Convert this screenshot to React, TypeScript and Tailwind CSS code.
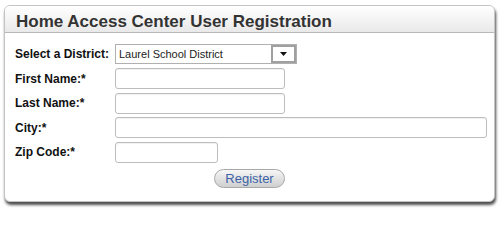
const fields = [
  { label: "First Name:*", width: "w-[170px]" },
  { label: "Last Name:*", width: "w-[170px]" },
  { label: "City:*", width: "w-[372px]" },
  { label: "Zip Code:*", width: "w-[103px]" },
];

export default function App() {
  return (
    <div className="h-[208px] w-[500px] bg-white pl-[4px] pt-[5px] font-['Liberation_Sans',Arial,sans-serif]">
      <div className="h-[197px] w-[491px] overflow-hidden rounded-[6px] border border-[#c4c4c4] bg-white shadow-[1px_3px_3px_rgba(0,0,0,0.7)]">
        <div className="h-[27px] border-b border-[#b8b8b8] bg-gradient-to-b from-white to-[#e9e9e9] pl-[11px] pt-[6px] text-[17px] font-bold leading-[20px] text-[#333]">
          Home Access Center User Registration
        </div>

        <div className="flex flex-col pl-[10px] pt-[9px]">
          <div className="flex h-[24.5px] items-center">
            <label className="w-[100px] text-[12px] font-bold leading-[14px] text-[#111]">
              Select a District:
            </label>
            <div className="flex h-[20px] w-[182px] border border-[#b0b0b0]">
              <div className="flex flex-1 items-center pl-[3px] text-[11px] text-[#222]">
                Laurel School District
              </div>
              <div className="flex w-[25px] items-center justify-center border-2 border-[#a0a0a0] bg-white">
                <svg width="7" height="4" viewBox="0 0 7 4">
                  <path d="M0 0 H7 L3.5 4 Z" fill="#111" />
                </svg>
              </div>
            </div>
          </div>

          {fields.map((field) => (
            <div key={field.label} className="flex h-[24.5px] items-center">
              <label className="w-[100px] text-[12px] font-bold leading-[14px] text-[#111]">
                {field.label}
              </label>
              <input
                type="text"
                className={`h-[21px] ${field.width} rounded-[3px] border border-[#bdbdbd] bg-white shadow-[inset_0_1px_1px_rgba(0,0,0,0.06)] outline-none`}
              />
            </div>
          ))}
        </div>

        <div className="mt-[4px] flex justify-center">
          <button className="h-[19px] w-[71px] rounded-full border border-[#a9a9a9] bg-gradient-to-b from-[#f6f6f6] to-[#cfcfcf] text-[13px] leading-[17px] text-[#3c63a8]">
            Register
          </button>
        </div>
      </div>
    </div>
  );
}
